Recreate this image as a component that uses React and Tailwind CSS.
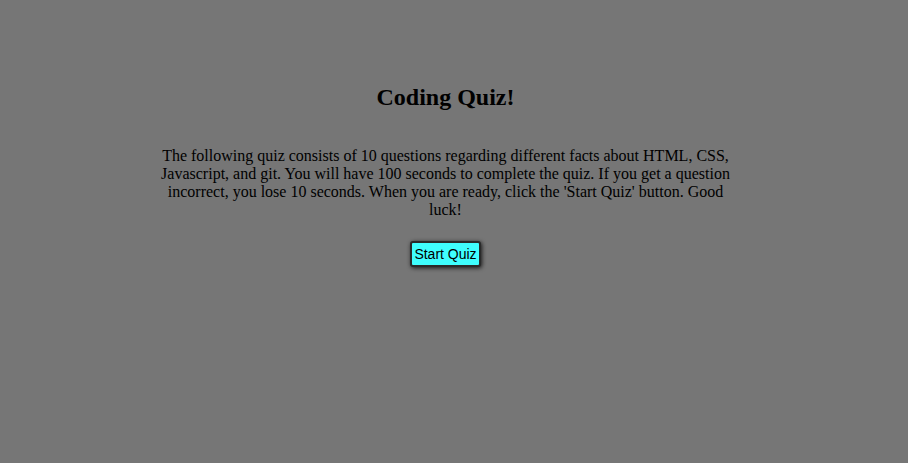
import React from 'react';

const App = () => {
  return (
    <div className="w-full h-[463px] bg-[#767676] overflow-hidden">
      <div className="w-[891px] flex flex-col items-center text-black font-['Liberation_Serif',serif]">
        {/* Header */}
        <h1 className="mt-[83px] text-[24px] leading-[28px] font-bold">Coding Quiz!</h1>

        {/* Intro */}
        <p className="mt-[36px] w-[580px] text-center text-[16px] leading-[18px]">
          The following quiz consists of 10 questions regarding different facts about HTML, CSS, Javascript, and git. You will have 100 seconds to complete the quiz. If you get a question incorrect, you lose 10 seconds. When you are ready, click the 'Start Quiz' button. Good luck!
        </p>

        <button className="mt-[22px] h-[26px] px-[2px] bg-[#3ffefe] border-2 border-[#2a2a2a] rounded-[3px] shadow-[1px_1px_4px_rgba(0,0,0,0.8)] font-['Liberation_Sans',sans-serif] text-[14px] leading-none text-black">
          Start Quiz
        </button>
      </div>
    </div>
  );
};

export default App;
